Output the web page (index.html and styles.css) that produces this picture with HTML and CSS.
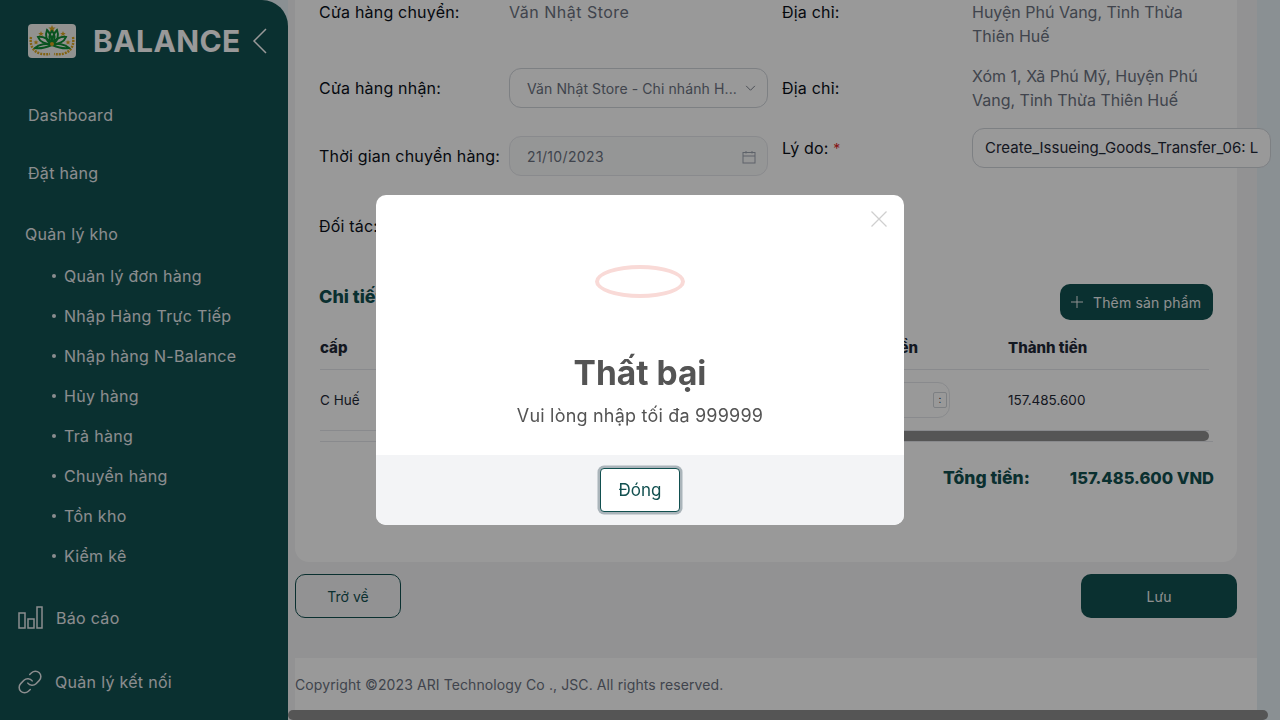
FILE: index.html
```html
<!DOCTYPE html>
<html lang="vi">
<head>
    <meta charset="UTF-8">
    <meta name="viewport" content="width=device-width, initial-scale=1.0">
    <title>Balance - Chuyển hàng</title>
    <link rel="stylesheet" href="styles.css">
</head>
<body>
    <div class="app">
        <!-- Sidebar -->
        <aside class="sidebar">
            <div class="brand">
                <svg class="logo" viewBox="0 0 48 34" width="48" height="34">
                    <rect width="48" height="34" rx="4" fill="#f4f4f0"/>
                    <g fill="none" stroke="#d9a520" stroke-width="2.4" stroke-dasharray="2 1">
                        <path d="M3 13 C1 24 8 32 22 30"/>
                        <path d="M45 13 C47 24 40 32 26 30"/>
                    </g>
                    <g fill="#d9a520">
                        <path d="M24 1l1 2.6 2.6 0-2 1.7.8 2.6-2.4-1.5-2.4 1.5.8-2.6-2-1.7 2.6 0z"/>
                        <path d="M13 7l.8 1.9 2 0-1.6 1.3.6 2-1.8-1.2-1.8 1.2.6-2-1.6-1.3 2 0z"/>
                        <path d="M35 7l.8 1.9 2 0-1.6 1.3.6 2-1.8-1.2-1.8 1.2.6-2-1.6-1.3 2 0z"/>
                        <path d="M8 16l.7 1.6 1.8 0-1.4 1.1.5 1.8-1.6-1-1.6 1 .5-1.8-1.4-1.1 1.8 0z"/>
                        <path d="M40 16l.7 1.6 1.8 0-1.4 1.1.5 1.8-1.6-1-1.6 1 .5-1.8-1.4-1.1 1.8 0z"/>
                    </g>
                    <g fill="none" stroke="#0f8a34" stroke-width="2">
                        <path d="M24 20 C20 15 21 10 24 7 C27 10 28 15 24 20z"/>
                        <path d="M24 20 C18 18 17 11 19 6 C22 9 24 14 24 20z"/>
                        <path d="M24 20 C30 18 31 11 29 6 C26 9 24 14 24 20z"/>
                        <path d="M24 20 C18 20 12 18 10 13 C15 12 21 15 24 20z"/>
                        <path d="M24 20 C30 20 36 18 38 13 C33 12 27 15 24 20z"/>
                        <path d="M24 21 C19 23 12 25 7 24 C11 20 19 19 24 21z"/>
                        <path d="M24 21 C29 23 36 25 41 24 C37 20 29 19 24 21z"/>
                    </g>
                    <circle cx="24" cy="20" r="2" fill="#d9a520"/>
                </svg>
                <span class="brand-name">BALANCE</span>
                <svg class="collapse" viewBox="0 0 16 26" width="16" height="26">
                    <path d="M14 1 L2 13 L14 25" fill="none" stroke="currentColor" stroke-width="1.5"/>
                </svg>
            </div>
            <nav class="menu">
                <a class="menu-item first">Dashboard</a>
                <a class="menu-item second">Đặt hàng</a>
                <a class="menu-group">Quản lý kho</a>
                <ul class="submenu">
                    <li>Quản lý đơn hàng</li>
                    <li>Nhập Hàng Trực Tiếp</li>
                    <li>Nhập hàng N-Balance</li>
                    <li>Hủy hàng</li>
                    <li>Trả hàng</li>
                    <li>Chuyển hàng</li>
                    <li>Tồn kho</li>
                    <li>Kiểm kê</li>
                </ul>
                <a class="menu-icon report">
                    <svg viewBox="0 0 26 24" width="26" height="24" fill="none" stroke="currentColor" stroke-width="1.5">
                        <rect x="1" y="7" width="6" height="15"/>
                        <rect x="10" y="13" width="6" height="9"/>
                        <rect x="19" y="1" width="5" height="21"/>
                    </svg>
                    Báo cáo
                </a>
                <a class="menu-icon link">
                    <svg viewBox="1 1 22 22" width="24" height="24" fill="none" stroke="currentColor" stroke-width="1.4" stroke-linecap="round">
                        <path d="M10 13a5 5 0 0 0 7.54.54l3-3a5 5 0 0 0-7.07-7.07l-1.72 1.71"/>
                        <path d="M14 11a5 5 0 0 0-7.54-.54l-3 3a5 5 0 0 0 7.07 7.07l1.71-1.71"/>
                    </svg>
                    Quản lý kết nối
                </a>
            </nav>
        </aside>

        <!-- Main content -->
        <main class="main">
            <section class="card">
                <div class="form-grid">
                    <div class="row row-1">
                        <label>Cửa hàng chuyển:</label>
                        <div class="value store">Văn Nhật Store</div>
                        <label>Địa chỉ:</label>
                        <div class="value">Huyện Phú Vang, Tỉnh Thừa Thiên Huế</div>
                    </div>
                    <div class="row row-2">
                        <label>Cửa hàng nhận:</label>
                        <div class="select">
                            <span>Văn Nhật Store - Chi nhánh H...</span>
                            <svg viewBox="0 0 12 8" width="11" height="7"><path d="M1 1l5 5 5-5" fill="none" stroke="currentColor"/></svg>
                        </div>
                        <label>Địa chỉ:</label>
                        <div class="value">Xóm 1, Xã Phú Mỹ, Huyện Phú Vang, Tỉnh Thừa Thiên Huế</div>
                    </div>
                    <div class="row row-3">
                        <label>Thời gian chuyển hàng:</label>
                        <div class="select date">
                            <span>21/10/2023</span>
                            <svg viewBox="0 0 14 14" width="14" height="14" fill="none" stroke="currentColor">
                                <rect x="1" y="2.5" width="12" height="10.5"/>
                                <path d="M1 6h12M4 1v2.5M10 1v2.5"/>
                            </svg>
                        </div>
                        <label class="reason-label">Lý do: <em>*</em></label>
                        <div class="reason">Create_Issueing_Goods_Transfer_06: L</div>
                    </div>
                    <div class="row row-4">
                        <label>Đối tác:</label>
                    </div>
                </div>

                <div class="detail-head">
                    <h2>Chi tiết đơn hàng</h2>
                    <button class="btn-add">
                        <svg viewBox="0 0 12 12" width="12" height="12"><path d="M6 0v12M0 6h12" stroke="currentColor" fill="none"/></svg>
                        Thêm sản phẩm
                    </button>
                </div>

                <div class="table">
                    <div class="t-row t-head">
                        <span>cấp</span>
                        <span class="t-mid">Giá tiền</span>
                        <span>Thành tiền</span>
                    </div>
                    <div class="t-row t-body">
                        <span>C Huế</span>
                        <span class="t-mid">
                            <span class="qty"><i class="spin"></i></span>
                        </span>
                        <span>157.485.600</span>
                    </div>
                    <div class="t-scroll"><div class="t-thumb"></div></div>
                </div>

                <div class="total">
                    <span class="total-label">Tổng tiền:</span>
                    <span>157.485.600 VND</span>
                </div>
            </section>

            <div class="actions">
                <button class="btn-back">Trở về</button>
                <button class="btn-save">Lưu</button>
            </div>

            <footer class="footer">Copyright ©2023 ARI Technology Co ., JSC. All rights reserved.</footer>
            <div class="page-scroll"></div>
        </main>
    </div>

    <!-- Modal -->
    <div class="overlay">
        <div class="modal">
            <svg class="modal-close" viewBox="0 0 16 16" width="16" height="16">
                <path d="M0.5 0.5l15 15M15.5 0.5l-15 15" stroke="currentColor" fill="none" stroke-width="1.3"/>
            </svg>
            <div class="modal-body">
                <div class="ring"></div>
                <h3>Thất bại</h3>
                <p>Vui lòng nhập tối đa 999999</p>
            </div>
            <div class="modal-foot">
                <button class="btn-close">Đóng</button>
            </div>
        </div>
    </div>
</body>
</html>
```

FILE: styles.css
```css
:root {
    --primary-color: #125050;
    --label-color: #0b0f19;
    --muted-color: #6b7280;
    --border-color: #d1d5db;
}

* {
    box-sizing: border-box;
}

html, body {
    height: 100%;
}

body {
    margin: 0;
    overflow: hidden;
    font-family: 'Inter', 'Noto Sans', sans-serif;
    font-size: 16px;
    color: var(--label-color);
    background: #e6f0f6;
}

button {
    font-family: inherit;
    cursor: pointer;
}

.app {
    display: flex;
    height: 720px;
}

/* Sidebar */
.sidebar {
    flex: 0 0 288px;
    height: 720px;
    background: var(--primary-color);
    border-top-right-radius: 26px;
    color: #e8ebee;
    font-size: 16px;
    letter-spacing: 0.3px;
}

.brand {
    display: flex;
    align-items: center;
    padding: 24px 20px 0 28px;
    height: 58px;
}

.logo {
    flex: none;
}

.brand-name {
    margin-left: 17px;
    font-size: 30px;
    font-weight: 700;
    letter-spacing: 0.4px;
    color: #fff;
}

.collapse {
    margin-left: auto;
    color: #fff;
}

.menu-item,
.menu-group,
.menu-icon {
    display: flex;
    align-items: center;
    height: 24px;
}

.menu-item {
    padding-left: 28px;
}

.first {
    margin-top: 45px;
}

.second {
    margin-top: 34px;
}

.menu-group {
    margin-top: 37px;
    padding-left: 25px;
}

.submenu {
    list-style: none;
    margin: 10px 0 0;
    padding: 0;
}

.submenu li {
    position: relative;
    height: 40px;
    line-height: 40px;
    padding-left: 64px;
}

.submenu li::before {
    content: '';
    position: absolute;
    left: 52px;
    top: 18px;
    width: 4px;
    height: 4px;
    border-radius: 50%;
    background: currentColor;
}

.menu-icon {
    gap: 12px;
    padding-left: 18px;
}

.report {
    margin-top: 30px;
}

.link {
    margin-top: 40px;
    gap: 13px;
    padding-left: 18px;
}

/* Main */
.main {
    flex: 0 0 969px;
    min-width: 0;
    padding-left: 7px;
    display: flex;
    flex-direction: column;
    background: #f3f3f5;
}

.card {
    width: 942px;
    height: 562px;
    flex: none;
    background: #fff;
    border-radius: 0 0 14px 14px;
    padding: 0 24px;
}

.row {
    display: grid;
    grid-template-columns: 190px 259px 204px 1fr;
    align-items: center;
}

.row > :nth-child(3) {
    margin-left: 14px;
}

label {
    white-space: nowrap;
    letter-spacing: 0.2px;
}

.value {
    line-height: 24px;
    color: var(--muted-color);
    width: 245px;
}

.store {
    letter-spacing: 0.5px;
}

.row-1 {
    height: 48px;
    align-items: start;
}

.row-1 label {
    line-height: 24px;
}

.row-2 {
    margin-top: 16px;
    height: 48px;
}

.row-3 {
    margin-top: 16px;
    height: 56px;
    align-items: start;
}

.select {
    display: flex;
    align-items: center;
    justify-content: space-between;
    height: 40px;
    padding: 1px 11px 0 17px;
    border: 1px solid var(--border-color);
    border-radius: 12px;
    font-size: 14px;
    letter-spacing: 0.1px;
    color: var(--muted-color);
    white-space: nowrap;
}

.date {
    margin-top: 8px;
    background: #f9fafb;
    border-color: #e5e7eb;
    letter-spacing: 0.35px;
}

.date svg {
    color: #9ca3af;
}

.row-3 > label:first-child {
    margin-top: 8px;
    line-height: 40px;
}

.reason-label {
    line-height: 40px;
}

.reason-label em {
    font-style: normal;
    font-size: 14px;
    color: #e02424;
}

.reason {
    width: 299px;
    height: 40px;
    line-height: 38px;
    padding: 0 12px;
    border: 1px solid var(--border-color);
    border-radius: 12px;
    font-size: 15px;
    color: #1f2937;
    white-space: nowrap;
    overflow: hidden;
    background: #fff;
}

.row-4 {
    height: 60px;
    padding-top: 30px;
    align-items: start;
}

.row-4 label {
    line-height: 24px;
}

.detail-head {
    display: flex;
    align-items: center;
    justify-content: space-between;
    height: 36px;
    margin-top: 40px;
    width: 894px;
}

h2 {
    margin: 0 0 12px;
    font-size: 18px;
    font-weight: 800;
    color: var(--primary-color);
}

.btn-add {
    display: flex;
    align-items: center;
    gap: 10px;
    width: 153px;
    height: 36px;
    padding: 0 11px;
    border: none;
    border-radius: 10px;
    background: var(--primary-color);
    color: #eef0f2;
    font-size: 14px;
    letter-spacing: 0.15px;
    white-space: nowrap;
}

.table {
    width: 893px;
    margin-top: 10px;
    margin-left: 1px;
}

.t-row {
    display: grid;
    grid-template-columns: 498px 190px 1fr;
    align-items: center;
    width: 889px;
    font-size: 13.5px;
}

.t-head {
    height: 40px;
    padding-bottom: 4px;
    border-bottom: 1px solid #e5e7eb;
    font-size: 15px;
    font-weight: 800;
    color: #1f2937;
}

.t-head .t-mid {
    padding-right: 90px;
}

.t-body {
    height: 61px;
    border-bottom: 1px solid #e5e7eb;
    color: #1f2937;
}

.t-mid {
    display: flex;
    justify-content: flex-end;
    padding-right: 58px;
}

.qty {
    display: flex;
    align-items: center;
    justify-content: flex-end;
    width: 100px;
    height: 36px;
    padding-right: 2px;
    border: 1px solid #e5e7eb;
    border-radius: 12px;
}

.spin {
    position: relative;
    width: 14px;
    height: 16px;
    border: 1px solid #d1d5db;
    border-radius: 2px;
}

.spin::before {
    content: ':';
    position: absolute;
    inset: 0;
    text-align: center;
    font-style: normal;
    font-size: 10px;
    line-height: 13px;
    color: #374151;
}

.t-scroll {
    height: 11px;
    border-bottom: 1px solid #e5e7eb;
}

.t-thumb {
    height: 10px;
    width: 689px;
    margin-left: 200px;
    border-radius: 5px;
    background: #8e8e8e;
}

.total {
    display: flex;
    justify-content: flex-end;
    align-items: center;
    gap: 40px;
    width: 895px;
    margin-top: 25px;
    font-size: 16.5px;
    font-weight: 800;
    color: var(--primary-color);
}

.total-label {
    font-size: 17.5px;
}

.actions {
    display: flex;
    justify-content: space-between;
    width: 942px;
    margin-top: 12px;
    flex: none;
}

.actions button {
    height: 44px;
    padding-top: 2px;
    border-radius: 10px;
    font-size: 14px;
}

.btn-back {
    width: 106px;
    border: 1px solid var(--primary-color);
    background: transparent;
    color: var(--primary-color);
}

.btn-save {
    width: 156px;
    border: none;
    background: var(--primary-color);
    color: #eef0f2;
}

.footer {
    width: 962px;
    height: 52px;
    flex: none;
    margin-top: 40px;
    padding-top: 18px;
    background: #fff;
    font-size: 14px;
    letter-spacing: 0.1px;
    color: var(--muted-color);
}

.page-scroll {
    margin-left: -7px;
    width: 980px;
    height: 10px;
    flex: none;
    border-radius: 5px;
    background: #8e8e8e;
}

/* Modal */
.overlay {
    position: fixed;
    inset: 0;
    background: rgba(0, 0, 0, 0.4);
}

.modal {
    position: absolute;
    left: 376px;
    top: 195px;
    width: 528px;
    height: 330px;
    display: flex;
    flex-direction: column;
    background: #fff;
    border-radius: 10px;
    overflow: hidden;
}

.modal-close {
    position: absolute;
    top: 16px;
    right: 17px;
    color: #cfcfcf;
}

.modal-body {
    flex: 1;
    text-align: center;
    padding-top: 70px;
}

.ring {
    width: 90px;
    height: 33px;
    margin: 0 auto;
    border: 4px solid #f9dad7;
    border-radius: 50%;
}

h3 {
    margin: 55px 0 0;
    font-size: 33.5px;
    line-height: 40px;
    font-weight: 700;
    color: #545454;
}

.modal-body p {
    margin: 9px 0 0;
    font-size: 18px;
    line-height: 28px;
    letter-spacing: 0.2px;
    color: #545454;
}

.modal-foot {
    flex: none;
    height: 70px;
    display: flex;
    align-items: center;
    justify-content: center;
    background: #f3f4f6;
}

.btn-close {
    width: 80px;
    height: 44px;
    border: 1px solid #125050;
    border-radius: 4px;
    background: #fff;
    box-shadow: 0 0 0 2.5px #aab4ba;
    color: #125050;
    font-size: 17px;
}
```
